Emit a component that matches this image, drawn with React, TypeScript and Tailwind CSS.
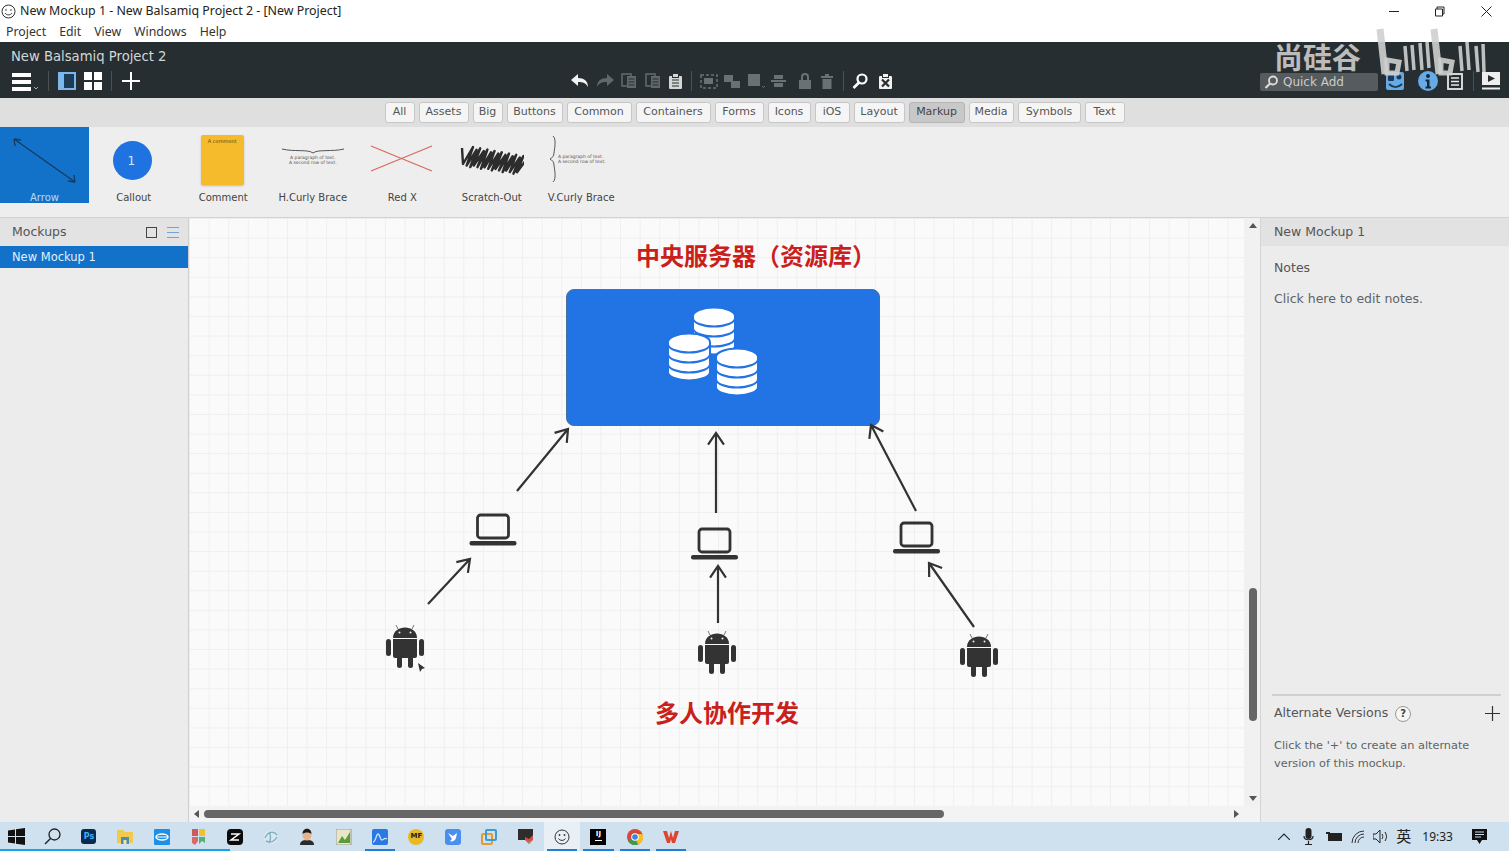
import type { ReactNode } from "react";

const tabs = [
  { label: "All", w: "w-[30px]" },
  { label: "Assets", w: "w-[50px]" },
  { label: "Big", w: "w-[30px]" },
  { label: "Buttons", w: "w-[56px]" },
  { label: "Common", w: "w-[65px]" },
  { label: "Containers", w: "w-[75px]" },
  { label: "Forms", w: "w-[49px]" },
  { label: "Icons", w: "w-[43px]" },
  { label: "iOS", w: "w-[35px]" },
  { label: "Layout", w: "w-[51px]" },
  { label: "Markup", w: "w-[56px]", active: true },
  { label: "Media", w: "w-[45px]" },
  { label: "Symbols", w: "w-[63px]" },
  { label: "Text", w: "w-[40px]" },
];

function Icon({ w, h, children, className }: { w: number; h: number; children: ReactNode; className?: string }) {
  return (
    <svg width={w} height={h} viewBox={`0 0 ${w} ${h}`} className={className}>
      {children}
    </svg>
  );
}

function Sep() {
  return <div className="h-[20px] w-px bg-[#4a5256]" />;
}

function DocIcon({ fill }: { fill: string }) {
  return (
    <Icon w={16} h={16}>
      <rect x="1" y="1" width="9" height="12" fill="none" stroke={fill} strokeWidth="1.6" />
      <rect x="6" y="3" width="9" height="12" fill={fill} />
      <path d="M7.5 6h6M7.5 9h6M7.5 12h6" stroke="#272e31" strokeWidth="1" />
    </Icon>
  );
}

function ClipIcon({ fill, cross }: { fill: string; cross?: boolean }) {
  return (
    <Icon w={15} h={17}>
      <rect x="1" y="3" width="13" height="13" rx="1" fill={fill} />
      <rect x="4.5" y="0.5" width="6" height="4" fill={fill} stroke="#272e31" strokeWidth="1" />
      {cross ? (
        <path d="M4 6.5l7 7M11 6.5l-7 7" stroke="#272e31" strokeWidth="2.2" />
      ) : (
        <path d="M4 7h7M4 10h7M4 13h7" stroke="#272e31" strokeWidth="1.2" />
      )}
    </Icon>
  );
}

function DimAlign() {
  return (
    <Icon w={20} h={16}>
      <path d="M1 7h15v2H1zM4 2h9v4H4zM4 10h9v4H4z" fill="#6a7174" />
    </Icon>
  );
}

function DarkBar() {
  return (
    <div className="flex h-[56px] flex-col bg-[#272e31] pl-[11px]">
      <div className="mt-[6px] h-[18px] text-[13.200px] leading-[18px] text-[#d4d6d7]">New Balsamiq Project 2</div>
      <div className="mt-[4px] flex h-[22px] items-center">
        <Icon w={27} h={19}>
          <path d="M1 1h19v4H1zM1 8h19v4H1zM1 15h19v4H1z" fill="#fff" />
          <path d="M23 15l2 2 2-2" fill="none" stroke="#aaa" strokeWidth="1" />
        </Icon>
        <div className="ml-[10px]">
          <Sep />
        </div>
        <div className="ml-[9px] h-[18px] w-[18px] border-[2px] border-l-[6px] border-[#7db6ea] bg-[#1d3b55]" />
        <div className="ml-[8px] grid h-[18px] w-[18px] grid-cols-2 gap-[2px]">
          <span className="bg-white" />
          <span className="bg-white" />
          <span className="bg-white" />
          <span className="bg-white" />
        </div>
        <div className="ml-[9px]">
          <Sep />
        </div>
        <Icon w={18} h={18} className="ml-[10px]">
          <path d="M9 0v18M0 9h18" stroke="#fff" strokeWidth="2" />
        </Icon>

        <div className="ml-[431px] flex items-center gap-[7px]">
          <Icon w={18} h={14}>
            <path d="M7 0L0 6l7 6V8c5 0 8 1 10 5 0-6-4-9-10-9z" fill="#f2f2f2" />
          </Icon>
          <Icon w={18} h={14}>
            <path d="M11 0l7 6-7 6V8C6 8 3 9 1 13c0-6 4-9 10-9z" fill="#61686b" />
          </Icon>
          <DocIcon fill="#61686b" />
          <div className="ml-[1px]">
            <DocIcon fill="#61686b" />
          </div>
          <ClipIcon fill="#d5d7d7" />
        </div>
        <div className="ml-[8px]">
          <Sep />
        </div>
        <div className="ml-[8px] flex items-center gap-[5.400px]">
          <Icon w={18} h={15}>
            <rect x="1" y="1" width="16" height="13" fill="none" stroke="#6a7174" strokeWidth="1.5" strokeDasharray="3 2" />
            <rect x="4" y="4" width="9" height="6" fill="#6a7174" />
          </Icon>
          <Icon w={18} h={15}>
            <path d="M1 1h9v7H1zM8 7h9v7H8z" fill="#6a7174" />
          </Icon>
          <Icon w={18} h={16}>
            <rect x="1" y="1" width="12" height="12" fill="#6a7174" />
            <path d="M15 13l1.500 1.500L18 13" fill="none" stroke="#6a7174" />
          </Icon>
          <DimAlign />
          <Icon w={16} h={17} className="ml-[1px]">
            <rect x="2" y="7" width="12" height="9" fill="#6a7174" />
            <path d="M5 7V4a3 3 0 016 0v3" fill="none" stroke="#6a7174" strokeWidth="2" />
          </Icon>
          <Icon w={14} h={16} className="ml-[2px]">
            <path d="M1 3h12v2H1zM5 1h4v2H5zM2.500 6h9v10h-9z" fill="#6a7174" />
          </Icon>
        </div>
        <div className="ml-[9px]">
          <Sep />
        </div>
        <Icon w={18} h={16} className="ml-[8px]">
          <circle cx="10" cy="6" r="4.500" fill="none" stroke="#fff" strokeWidth="2.2" />
          <path d="M7 9.500L1.500 15" stroke="#fff" strokeWidth="2.6" />
        </Icon>
        <div className="ml-[8px]">
          <ClipIcon fill="#f2f2f2" cross />
        </div>

        <div className="ml-[367px] mt-[1px] flex h-[18px] w-[118px] items-center rounded-[2px] bg-[#565b5e] pl-[4px] text-[12px] text-[#c9cbcc]">
          <Icon w={15} h={14} className="mr-[4px]">
            <circle cx="9" cy="5.500" r="4" fill="none" stroke="#ddd" strokeWidth="1.800" />
            <path d="M6 8.500L1.500 13" stroke="#ddd" strokeWidth="2.200" />
          </Icon>
          Quick Add
        </div>
        <Icon w={18} h={18} className="ml-[8px]">
          <rect width="18" height="18" rx="2" fill="#67abe6" />
          <rect x="2" y="3" width="6" height="6" rx="1" fill="#1d3b55" />
          <circle cx="13" cy="5" r="2.500" fill="#1d3b55" />
          <path d="M3 12c4 4 9 4 13 0" fill="none" stroke="#1d3b55" strokeWidth="2" />
        </Icon>
        <Icon w={20} h={20} className="ml-[14px]">
          <circle cx="10" cy="10" r="10" fill="#67abe6" />
          <circle cx="10" cy="5" r="2" fill="#15283a" />
          <path d="M7.500 8.500h4v7h1.500v2H7.500v-2H9v-5H7.500z" fill="#15283a" />
        </Icon>
        <Icon w={16} h={17} className="ml-[9px]">
          <rect x="1" y="1" width="14" height="15" fill="none" stroke="#e8e8e8" strokeWidth="1.800" />
          <path d="M4 5h8M4 8.500h8M4 12h8" stroke="#e8e8e8" strokeWidth="1.500" />
        </Icon>
        <div className="ml-[10px]">
          <Sep />
        </div>
        <Icon w={18} h={18} className="ml-[8px]">
          <rect y="0" width="18" height="13" fill="#eee" />
          <path d="M6 3l7 3.500L6 10z" fill="#272e31" />
          <rect y="15.500" width="18" height="2" fill="#eee" />
        </Icon>
      </div>
    </div>
  );
}

function Watermark() {
  return (
    <>
      <div className="absolute left-[1274px] top-[42px] text-[29px] leading-[29px] font-bold text-[#bcbcbc] font-['Noto_Sans_CJK_SC',sans-serif]">
        尚硅谷
      </div>
      <svg className="absolute left-[1370px] top-[24px]" width="120" height="60" viewBox="1370 24 120 60">
        <g fill="none" stroke="#cfcfcf" strokeOpacity="0.9" strokeLinecap="butt">
          <path d="M1380 29l5 45" strokeWidth="7" />
          <path d="M1387 60l12 2-2 11h-10z" strokeWidth="5" />
          <path d="M1405 46l2 25M1412 45l2 25M1420 43l2 27M1427 42l2 26" strokeWidth="3.500" />
          <path d="M1434 29l5 45" strokeWidth="7" />
          <path d="M1441 60l11 2-2 11h-9z" strokeWidth="5" />
          <path d="M1460 46l2 25M1467 42l2 28M1476 46l2 26M1483 44l1 28" strokeWidth="3.500" />
        </g>
      </svg>
    </>
  );
}

function TinyText({ className }: { className?: string }) {
  return (
    <div className={`text-[4.500px] leading-[5px] text-[#555] ${className ?? ""}`}>
      A paragraph of text.
      <br />A second row of text.
    </div>
  );
}

// zigzag for the scratch-out thumbnail
function scratchPath() {
  let d = "M2 4";
  for (let i = 0; i < 16; i++) {
    const x = 2 + i * 3.600;
    const top = 3 + i * 0.650;
    const bottom = 20 + i * 0.550;
    d += `L${x + 1} ${bottom + (i % 3)}L${x + 11} ${top + (i % 2) * 2}`;
  }
  return d;
}

function Palette() {
  const item = "relative flex h-[76px] w-[89.500px] flex-col items-center";
  const label = "absolute bottom-[-1px] whitespace-nowrap text-[10px] leading-[12px] text-[#444]";
  return (
    <div className="flex h-[91px] border-b border-[#d2d2d2] bg-[#eeeeee]">
      <div className={`${item} !w-[89px] bg-[#1272c9]`}>
        <svg width="88" height="64" viewBox="0 0 88 64">
          <path
            d="M13 12l61 43M13 12l7 1M13 12l1 7M74 55l-7-1M74 55l-1-7"
            fill="none"
            stroke="#173a5e"
            strokeWidth="1.300"
          />
        </svg>
        <div className="absolute bottom-[-1px] text-[10px] leading-[12px] text-[#b8d8f2]">Arrow</div>
      </div>
      <div className={item}>
        <div className="mr-[2px] mt-[14px] flex h-[39px] w-[39px] items-center justify-center rounded-full bg-[#1f73e0] pr-[3px] text-[12px] text-[#d8e8fb]">
          1
        </div>
        <div className={label}>Callout</div>
      </div>
      <div className={item}>
        <div className="mr-[2px] mt-[8px] h-[50px] w-[43px] rounded-[2px] bg-[#f6bb2c] pt-[3px] text-center text-[5px] leading-[6px] text-[#5b4310] shadow-[0_1px_2px_#bbb]">
          A comment
        </div>
        <div className={label}>Comment</div>
      </div>
      <div className={item}>
        <svg className="mt-[20px]" width="64" height="8" viewBox="0 0 64 8">
          <path d="M1 2c12 3 26 0 31 4 5-4 19-1 31-4" fill="none" stroke="#555" strokeWidth="1" />
        </svg>
        <TinyText className="text-center" />
        <div className={label}>H.Curly Brace</div>
      </div>
      <div className={item}>
        <svg className="mt-[17px]" width="64" height="30" viewBox="0 0 64 30">
          <path d="M1 27L62 2M1 2l61 25" stroke="#d9695f" strokeWidth="1.300" />
        </svg>
        <div className={label}>Red X</div>
      </div>
      <div className={item}>
        <svg className="mt-[17px]" width="64" height="34" viewBox="0 0 64 34">
          <path d={scratchPath()} fill="none" stroke="#2c2c2c" strokeWidth="2.400" strokeLinejoin="round" />
        </svg>
        <div className={label}>Scratch-Out</div>
      </div>
      <div className={item}>
        <div className="mr-[10px] mt-[8px] flex items-center gap-[1px]">
          <svg width="10" height="48" viewBox="0 0 10 48">
            <path d="M6 1c4 3 1 15 1 17 0 3-2 5-4 6 2 1 4 3 4 6 0 2 3 14-1 17" fill="none" stroke="#555" strokeWidth="1" />
          </svg>
          <TinyText />
        </div>
        <div className={label}>V.Curly Brace</div>
      </div>
    </div>
  );
}

function MockupsPanel() {
  return (
    <div className="w-[189px] shrink-0 border-r border-[#cfcfcf] bg-[#ececec]">
      <div className="flex h-[28px] items-center bg-[#e3e3e3] pl-[12px] pr-[9px] text-[12.500px] text-[#555]">
        <span className="flex-1">Mockups</span>
        <div className="h-[11px] w-[11px] border-[1.500px] border-[#444]" />
        <div className="ml-[10px] flex h-[11px] w-[12px] flex-col justify-between">
          <span className="h-px bg-[#6ba5e0]" />
          <span className="h-px bg-[#6ba5e0]" />
          <span className="h-px bg-[#6ba5e0]" />
        </div>
      </div>
      <div className="flex h-[22px] items-center bg-[#1272c9] pl-[12px] pt-[2px] text-[11.500px] text-[#e3eefa]">New Mockup 1</div>
    </div>
  );
}

function Stack({ cx, c }: { cx: number; c: number }) {
  const r = 21;
  const ry = 8.500;
  const body = `M${cx - r} ${c}A${r} ${ry} 0 0 1 ${cx + r} ${c}V${c + 30}A${r} ${ry} 0 0 1 ${cx - r} ${c + 30}Z`;
  const arc = (y: number) => `M${cx - r} ${y}A${r} ${ry} 0 0 0 ${cx + r} ${y}`;
  return (
    <g>
      <path d={body} fill="#fff" stroke="#2273e4" strokeWidth="2" />
      <path d={`${arc(c + 2)}${arc(c + 12)}${arc(c + 22)}`} fill="none" stroke="#2273e4" strokeWidth="2" />
    </g>
  );
}

function Laptop({ x, y }: { x: number; y: number }) {
  return (
    <g transform={`translate(${x} ${y})`}>
      <rect x="-15" y="0" width="31" height="23" rx="3" fill="none" stroke="#333" strokeWidth="2.800" />
      <rect x="-23" y="26" width="47" height="4.500" rx="2" fill="#333" />
    </g>
  );
}

function Android({ x, y }: { x: number; y: number }) {
  return (
    <g transform={`translate(${x} ${y})`} fill="#333">
      <path d="M-12-9c0-14 24-14 24 0z" />
      <path d="M-7-18l-2-4M7-18l2-4" stroke="#555" strokeWidth="0.800" />
      <circle cx="-5.500" cy="-14.500" r="1" fill="#eee" />
      <circle cx="5.500" cy="-14.500" r="1" fill="#eee" />
      <path d="M-12-8h24v17a2 2 0 01-2 2h-20a2 2 0 01-2-2z" />
      <rect x="-19" y="-8" width="5" height="17" rx="2.500" />
      <rect x="14" y="-8" width="5" height="17" rx="2.500" />
      <rect x="-8" y="9" width="5" height="12" rx="2.500" />
      <rect x="3" y="9" width="5" height="12" rx="2.500" />
    </g>
  );
}

function Arrow({ x1, y1, x2, y2 }: { x1: number; y1: number; x2: number; y2: number }) {
  const a = Math.atan2(y2 - y1, x2 - x1);
  const len = 14;
  const p = (d: number) => `${x2 - len * Math.cos(a + d)} ${y2 - len * Math.sin(a + d)}`;
  return (
    <path
      d={`M${x1} ${y1}L${x2} ${y2}M${p(0.6)}L${x2} ${y2}L${p(-0.6)}`}
      fill="none"
      stroke="#333"
      strokeWidth="2.200"
    />
  );
}

function Canvas() {
  return (
    <div className="relative flex-1 overflow-hidden bg-[#fafafa] bg-[linear-gradient(#efefef_1px,transparent_1px),linear-gradient(90deg,#efefef_1px,transparent_1px)] bg-[size:19.600px_19.600px]">
      <div className="absolute left-[447px] top-[22px] whitespace-nowrap text-[24px] leading-[30px] font-bold text-[#c9211a] font-['Noto_Sans_CJK_SC',sans-serif]">
        中央服务器（资源库）
      </div>
      <div className="absolute left-[377px] top-[71px] h-[137px] w-[314px] rounded-[8px] border border-[#4d6f9e] bg-[#2273e4]" />
      <svg className="absolute left-0 top-0" width="1055" height="588" viewBox="189 218 1055 588">
        <Stack cx={714} c={316} />
        <Stack cx={689} c={342} />
        <Stack cx={737} c={357} />
        <Arrow x1={517} y1={491} x2={568} y2={429} />
        <Arrow x1={716} y1={513} x2={716} y2={433} />
        <Arrow x1={916} y1={511} x2={871} y2={425} />
        <Arrow x1={428} y1={604} x2={470} y2={559} />
        <Arrow x1={718} y1={623} x2={718} y2={566} />
        <Arrow x1={974} y1={627} x2={929} y2={563} />
        <Laptop x={492.5} y={515} />
        <Laptop x={714} y={529} />
        <Laptop x={916} y={523} />
        <Android x={405} y={647} />
        <Android x={717} y={653} />
        <Android x={979} y={656} />
        <path d="M418 663l7 5-3 1-2 3z" fill="#333" />
      </svg>
      <div className="absolute left-[466px] top-[479px] whitespace-nowrap text-[24px] leading-[30px] font-bold text-[#c9211a] font-['Noto_Sans_CJK_SC',sans-serif]">
        多人协作开发
      </div>
    </div>
  );
}

function VScroll() {
  return (
    <div className="flex h-full w-[16px] shrink-0 flex-col items-center bg-[#f1f1f1] pl-[2px]">
      <div className="mt-[5px] h-0 w-0 border-x-[4px] border-b-[5px] border-x-transparent border-b-[#555]" />
      <div className="mt-[360px] h-[133px] w-[8px] rounded-[4px] bg-[#666]" />
      <div className="mt-[75px] h-0 w-0 border-x-[4px] border-t-[5px] border-x-transparent border-t-[#555]" />
    </div>
  );
}

function HScroll() {
  return (
    <div className="flex h-[16px] items-center bg-[#f3f3f3] pl-[5px]">
      <div className="h-0 w-0 border-y-[4px] border-r-[5px] border-y-transparent border-r-[#555]" />
      <div className="ml-[5px] h-[8px] w-[740px] rounded-[4px] bg-[#666]" />
      <div className="ml-[290px] h-0 w-0 border-y-[4px] border-l-[5px] border-y-transparent border-l-[#555]" />
    </div>
  );
}

function RightPanel() {
  return (
    <div className="flex w-[249px] shrink-0 flex-col border-l border-[#d4d4d4] bg-[#ececec]">
      <div className="flex h-[28px] items-center bg-[#e2e2e2] pl-[13px] text-[12.500px] text-[#555]">New Mockup 1</div>
      <div className="pl-[13px] pt-[14px] text-[12.500px] leading-[16px] text-[#555]">Notes</div>
      <div className="pl-[13px] pt-[15px] text-[12.500px] leading-[16px] text-[#5d6468]">Click here to edit notes.</div>
      <div className="flex-1" />
      <div className="ml-[11px] mr-[8px] h-[2px] bg-[#d0d0d0]" />
      <div className="flex h-[35px] items-center pl-[13px] pr-[9px] text-[12.500px] text-[#555]">
        <span>Alternate Versions</span>
        <span className="ml-[7px] flex h-[16px] w-[16px] items-center justify-center rounded-full border border-[#999] bg-[#f6f6f6] text-[10px] font-bold text-[#444]">
          ?
        </span>
        <Icon w={15} h={15} className="ml-auto">
          <path d="M7.500 0v15M0 7.500h15" stroke="#333" strokeWidth="1.200" />
        </Icon>
      </div>
      <div className="h-[91px] pl-[13px] pt-[6px] text-[11.300px] leading-[18px] text-[#5d6468]">
        Click the '+' to create an alternate
        <br />
        version of this mockup.
      </div>
    </div>
  );
}

const taskIcons: { key: string; node: ReactNode; bar?: boolean; active?: boolean }[] = [
  {
    key: "win",
    node: (
      <Icon w={17} h={17}>
        <path d="M0 2.500l7-1v6.500H0zM8 1.300L17 0v8H8zM0 9h7v6.500l-7-1zM8 9h9v8l-9-1.300z" fill="#111" />
      </Icon>
    ),
  },
  {
    key: "search",
    node: (
      <Icon w={17} h={17}>
        <circle cx="10.500" cy="6.500" r="5.500" fill="none" stroke="#222" strokeWidth="1.300" />
        <path d="M6.500 10.500L1 16" stroke="#222" strokeWidth="1.500" />
      </Icon>
    ),
  },
  {
    key: "ps",
    node: (
      <div className="flex h-[15px] w-[15px] items-center justify-center rounded-[3px] bg-[#0a2a50] text-[8px] font-bold text-[#3fb0f5]">
        Ps
      </div>
    ),
  },
  {
    key: "folder",
    node: (
      <Icon w={16} h={15}>
        <path d="M0 1h6l2 2h8v11H0z" fill="#f2c84e" />
        <rect x="4" y="8" width="8" height="7" fill="#4b8fb0" />
        <rect x="6.500" y="11" width="3" height="4" fill="#f2e2a8" />
      </Icon>
    ),
  },
  {
    key: "browser",
    node: (
      <Icon w={16} h={16}>
        <rect width="16" height="16" rx="1" fill="#1e8fe6" />
        <ellipse cx="8" cy="8" rx="6" ry="3" fill="none" stroke="#fff" strokeWidth="1.500" />
        <path d="M2 8h12" stroke="#fff" strokeWidth="1" />
      </Icon>
    ),
  },
  {
    key: "bookmark",
    node: (
      <Icon w={13} h={16}>
        <path d="M0 0h6v7H0z" fill="#d05a5a" />
        <path d="M7 0h6v7H7z" fill="#f0c030" />
        <path d="M0 8h6v4l-3 4-3-2z" fill="#d56a6a" />
        <path d="M7 8h6v6l-3-2-3 3z" fill="#55b075" />
      </Icon>
    ),
  },
  {
    key: "capcut",
    node: (
      <Icon w={16} h={16}>
        <rect width="16" height="16" rx="4" fill="#0b0b0b" />
        <path d="M4 5h8L4 11h8" fill="none" stroke="#fff" strokeWidth="1.500" />
      </Icon>
    ),
  },
  {
    key: "swirl",
    node: (
      <Icon w={16} h={16}>
        <circle cx="8" cy="8" r="7" fill="#d9e8ee" />
        <path d="M2 9c3-7 9-7 12-3M3 12c4 2 8 1 11-4M6 3c2 3 2 8 0 11" fill="none" stroke="#7fb0c0" strokeWidth="1.400" />
      </Icon>
    ),
  },
  {
    key: "face",
    node: (
      <Icon w={16} h={17}>
        <path d="M1 17c0-4 3-5 7-5s7 1 7 5z" fill="#2b2b2b" />
        <ellipse cx="8" cy="7" rx="4.500" ry="5.500" fill="#e5b48e" />
        <path d="M3.500 6c0-7 9-7 9 0-2-2-7-2-9 0z" fill="#1a1a1a" />
      </Icon>
    ),
  },
  {
    key: "notepad",
    node: (
      <Icon w={16} h={16}>
        <rect width="15" height="16" fill="#e9e6c8" stroke="#999" />
        <path d="M2 14l4-7 3 4 5-8v11z" fill="#5a9d3a" />
      </Icon>
    ),
  },
  {
    key: "chart",
    bar: true,
    node: (
      <Icon w={16} h={16}>
        <rect width="16" height="16" rx="2" fill="#2a78e4" />
        <path d="M1 13c3 0 3-8 5-8s2 6 4 6 2-3 5-1" fill="none" stroke="#cfe4fb" strokeWidth="1.300" />
      </Icon>
    ),
  },
  {
    key: "mf",
    node: (
      <div className="flex h-[16px] w-[16px] items-center justify-center rounded-full bg-[#e8b923] text-[7px] font-bold text-[#222]">
        MF
      </div>
    ),
  },
  {
    key: "bird",
    node: (
      <Icon w={16} h={16}>
        <rect width="16" height="16" rx="3" fill="#4a8ef0" />
        <path d="M3 4l5 3 4-3-1 5c-1 3-4 4-6 3l2-2z" fill="#fff" />
      </Icon>
    ),
  },
  {
    key: "vm",
    node: (
      <Icon w={16} h={16}>
        <rect x="1" y="5" width="10" height="10" rx="1" fill="none" stroke="#e69a2e" strokeWidth="2" />
        <rect x="5" y="1" width="10" height="10" rx="1" fill="none" stroke="#3d9ad6" strokeWidth="2" />
      </Icon>
    ),
  },
  {
    key: "term",
    node: (
      <Icon w={15} h={15}>
        <rect width="15" height="11" fill="#2d2d2d" />
        <path d="M7 8l4 2 4-4v5l-4 4-4-4z" fill="#d94a4a" />
        <path d="M9 11l2 2 4-3-4 5z" fill="#7cb342" />
      </Icon>
    ),
  },
  {
    key: "smile",
    bar: true,
    active: true,
    node: (
      <Icon w={16} h={16}>
        <circle cx="8" cy="8" r="7" fill="none" stroke="#333" strokeWidth="1" />
        <circle cx="5.500" cy="6" r="0.900" fill="#333" />
        <circle cx="10.500" cy="6" r="0.900" fill="#333" />
        <path d="M4.500 9.500c1.500 2.500 5.500 2.500 7 0" fill="none" stroke="#333" strokeWidth="1" />
      </Icon>
    ),
  },
  {
    key: "idea",
    bar: true,
    node: (
      <div className="flex h-[16px] w-[16px] flex-col items-center bg-black pt-[1px] text-[7px] leading-[8px] font-bold text-white">
        IJ
        <span className="mt-[2px] h-px w-[7px] bg-white" />
      </div>
    ),
  },
  {
    key: "chrome",
    bar: true,
    node: (
      <Icon w={16} h={16}>
        <circle cx="8" cy="8" r="8" fill="#d9463a" />
        <path d="M8 8L1 12a8 8 0 0010 3.500z" fill="#3a9d4c" />
        <path d="M8 8l3 7.500A8 8 0 0015.500 5H8z" fill="#f3c02c" />
        <circle cx="8" cy="8" r="3.800" fill="#fff" />
        <circle cx="8" cy="8" r="2.800" fill="#3f7fe8" />
      </Icon>
    ),
  },
  {
    key: "wps",
    bar: true,
    node: (
      <Icon w={16} h={14}>
        <path d="M0 1h4l2 7 2-7 2 7 2-7h4l-4 12H9L8 9l-1 4H4z" fill="#e0432f" />
      </Icon>
    ),
  },
];

function Taskbar() {
  return (
    <div className="relative flex h-[29px] items-center bg-[#cfe0ee] text-[#222]">
      <div className="absolute bottom-0 left-0 h-[2px] w-[230px] bg-[#12a5e8]" />
      <div className="-ml-[2px] flex h-full">
        {taskIcons.map((t) => (
          <div
            key={t.key}
            className={`relative flex h-full w-[36.400px] shrink-0 items-center justify-center ${t.active ? "bg-[#e8f0f6]" : ""}`}
          >
            {t.node}
            {t.bar && <div className="absolute bottom-0 left-[3px] right-[3px] h-[2px] bg-[#1f7fd6]" />}
          </div>
        ))}
      </div>
      <div className="ml-auto flex h-full items-center pr-[22px]">
        <Icon w={12} h={7} className="mr-[13px]">
          <path d="M0 7l6-6 6 6" fill="none" stroke="#222" strokeWidth="1.100" />
        </Icon>
        <Icon w={11} h={17} className="mr-[12px]">
          <rect x="2.500" y="0" width="6" height="11" rx="3" fill="#222" />
          <path d="M1 8c0 5 9 5 9 0M5.500 13v3M2 16.500h7" fill="none" stroke="#222" strokeWidth="1.200" />
        </Icon>
        <Icon w={16} h={9} className="mr-[9px]">
          <rect x="2" y="1" width="14" height="8" fill="#222" />
          <rect x="0" y="0" width="4" height="2" fill="#222" />
        </Icon>
        <Icon w={13} h={13} className="mr-[9px]">
          <path d="M1 13A12 12 0 0113 1M4 13a9 9 0 019-9M7 13a6 6 0 016-6" fill="none" stroke="#333" strokeWidth="1" />
        </Icon>
        <Icon w={15} h={13} className="mr-[8px]">
          <path d="M0 4h3l4-4v13L3 9H0z" fill="none" stroke="#222" strokeWidth="1" />
          <path d="M9 4c1 2 1 3 0 5M12 2c2 3 2 6 0 9" fill="none" stroke="#222" strokeWidth="1" />
        </Icon>
        <span className="mr-[11px] text-[15px] font-['Noto_Sans_CJK_SC',sans-serif]">英</span>
        <span className="mr-[19px] text-[12px] font-['Noto_Sans',sans-serif]">19:33</span>
        <Icon w={15} h={15}>
          <path d="M0 0h15v11H10l-2.500 4-2.500-4H0z" fill="#111" />
          <path d="M3 3h9M3 5.500h9M3 8h6" stroke="#cfe0ee" strokeWidth="1" />
        </Icon>
      </div>
    </div>
  );
}

export default function App() {
  return (
    <div className="relative flex h-[851px] w-[1509px] flex-col overflow-hidden bg-white font-['DejaVu_Sans',sans-serif]">
      <div className="flex h-[21px] items-center pl-[1px] pt-[1px] text-[12.400px] text-[#222] font-['Noto_Sans',sans-serif]">
        <Icon w={15} h={15} className="mr-[4px]">
          <circle cx="7.500" cy="7.500" r="6.500" fill="none" stroke="#333" strokeWidth="1" />
          <circle cx="5" cy="6" r="0.800" fill="#333" />
          <circle cx="10" cy="6" r="0.800" fill="#333" />
          <path d="M4 9c1.500 2.500 5.500 2.500 7 0" fill="none" stroke="#333" strokeWidth="1" />
        </Icon>
        <span>New Mockup 1 - New Balsamiq Project 2 - [New Project]</span>
        <Icon w={10} h={1} className="ml-auto mr-[35px]">
          <rect width="10" height="1" fill="#222" />
        </Icon>
        <Icon w={11} h={11} className="mr-[36px]">
          <path d="M1.500 3h7v7h-7zM3 3V1h7v7H8.500" fill="none" stroke="#222" strokeWidth="1" />
        </Icon>
        <Icon w={11} h={11} className="mr-[17px]">
          <path d="M0.500 0.500l10 10M10.500 0.500l-10 10" stroke="#222" strokeWidth="1" />
        </Icon>
      </div>
      <div className="flex h-[21px] items-center gap-[13px] pl-[6px] pt-[1px] text-[12.300px] text-[#333] font-['Noto_Sans',sans-serif]">
        <span>Project</span>
        <span>Edit</span>
        <span>View</span>
        <span>Windows</span>
        <span>Help</span>
      </div>
      <DarkBar />
      <div className="flex h-[29px] items-center justify-center gap-[4px] bg-[#dfdfdf]">
        {tabs.map((t) => (
          <div
            key={t.label}
            className={`flex h-[21px] items-center justify-center rounded-[3px] border text-[11px] ${t.w} ${
              t.active
                ? "border-[#b5b5b5] bg-[#c8c8c8] text-[#444]"
                : "border-[#c6c6c6] bg-[#f5f5f5] text-[#555]"
            }`}
          >
            {t.label}
          </div>
        ))}
      </div>
      <Palette />
      <div className="flex min-h-0 flex-1">
        <MockupsPanel />
        <div className="flex min-w-0 flex-1 flex-col">
          <div className="flex min-h-0 flex-1">
            <Canvas />
            <VScroll />
          </div>
          <HScroll />
        </div>
        <RightPanel />
      </div>
      <Taskbar />
      <Watermark />
    </div>
  );
}
